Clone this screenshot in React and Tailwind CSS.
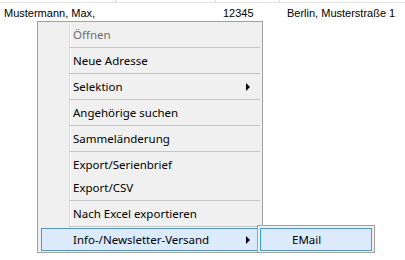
const items = [
  { label: 'Öffnen', disabled: true, sep: true },
  { label: 'Neue Adresse', sep: true },
  { label: 'Selektion', arrow: true, sep: true },
  { label: 'Angehörige suchen', sep: true },
  { label: 'Sammeländerung', sep: true },
  { label: 'Export/Serienbrief' },
  { label: 'Export/CSV', sep: true },
  { label: 'Nach Excel exportieren', sep: true },
  { label: 'Info-/Newsletter-Versand', arrow: true, active: true },
]

function Arrow() {
  return <span className="ml-auto mr-[8px] h-0 w-0 border-y-[4px] border-l-[4px] border-y-transparent border-l-black" />
}

function MenuItem({ item }) {
  return (
    <div
      className={
        'relative mx-[3px] flex h-[23px] items-center border pl-[31px] ' +
        (item.active ? 'border-[#33a0e0] bg-[#dbeafc]' : 'border-transparent')
      }
    >
      <span className={item.disabled ? 'text-[#6d6d6d]' : 'text-black'}>{item.label}</span>
      {item.arrow && <Arrow />}
    </div>
  )
}

export default function App() {
  return (
    <div className="relative h-[260px] w-[405px] overflow-hidden bg-white text-[11px] text-black [font-family:'Liberation_Sans',Arial,sans-serif]">
      <div className="flex h-[3px] border-b border-[#e3e3e3]">
        <div className="w-[116px] border-r border-[#dcdcdc]" />
        <div className="w-[100px] border-r border-[#dcdcdc]" />
        <div className="w-[64px] border-r border-[#dcdcdc]" />
      </div>
      <div className="flex h-[20px] items-center pt-[1px]">
        <div className="w-[216px] pl-[4px]">Mustermann, Max,</div>
        <div className="w-[71px] pl-[7px]">12345</div>
        <div>Berlin, Musterstraße 1</div>
      </div>

      <div className="absolute left-[37px] top-[21px] w-[226px] border border-[#a0a0a0] bg-[#f0f0f0] py-[1px] text-[11.5px] [font-family:'Noto_Sans',sans-serif]">
        <div className="absolute bottom-0 left-[31px] top-0 w-[2px] border-l border-[#dcdcdc] bg-white" />
        {items.map((item) => (
          <div key={item.label}>
            <MenuItem item={item} />
            {item.sep && (
              <div className="flex h-[3px] items-center pl-[31px] pr-[2px]">
                <div className="relative h-px w-full bg-[#c5c5c5]" />
              </div>
            )}
          </div>
        ))}
      </div>

      <div className="absolute left-[257px] top-[225px] h-[28px] w-[118px] border border-[#a0a0a0] bg-[#f0f0f0] px-[2px] pb-[1px] pt-[2px] text-[11.5px] [font-family:'Noto_Sans',sans-serif]">
        <div className="flex h-[23px] items-center border border-[#33a0e0] bg-[#dbeafc] pl-[31px]">EMail</div>
      </div>
    </div>
  )
}
